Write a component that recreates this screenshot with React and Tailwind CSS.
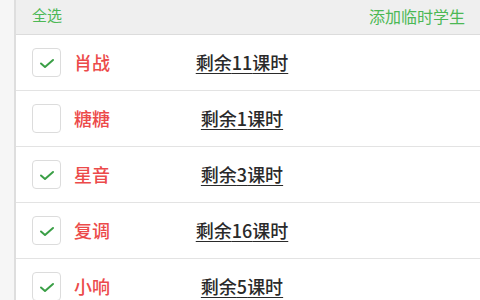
import React from 'react';

const students = [
  { name: '肖战', left: 11, checked: true },
  { name: '糖糖', left: 1, checked: false },
  { name: '星音', left: 3, checked: true },
  { name: '复调', left: 16, checked: true },
  { name: '小响', left: 5, checked: true },
];

const CheckBox = ({ checked }) => (
  <div className="w-[29px] h-[29px] rounded-[4px] border border-[#dcdcdc] bg-white flex items-center justify-center shrink-0">
    {checked && (
      <svg width="16" height="12" viewBox="0 0 16 12" fill="none">
        <path d="M2 6.5 L6 10 L14 3" stroke="#3a9f46" strokeWidth="2" strokeLinecap="round" strokeLinejoin="round" />
      </svg>
    )}
  </div>
);

const App = () => {
  return (
    <div
      className="w-[480px] h-[300px] overflow-hidden flex bg-white"
      style={{ fontFamily: '"Noto Sans CJK SC", "Noto Sans", sans-serif' }}
    >
      <div className="w-[16px] shrink-0 bg-[#f6f6f6] border-r-2 border-[#dedede]" />

      <div className="flex-1 flex flex-col">
        {/* Header */}
        <div className="h-[35px] shrink-0 bg-[#efefef] border-b border-[#dcdcdc] flex items-center justify-between pl-4 pr-[15px] pb-[3px]">
          <span className="text-[15px] text-[#4cb855]">全选</span>
          <span className="text-[16px] text-[#4cb855]">添加临时学生</span>
        </div>

        {/* Rows */}
        {students.map((s) => (
          <div key={s.name} className="h-[56px] shrink-0 border-b border-[#e3e3e3] flex items-center pl-4">
            <CheckBox checked={s.checked} />
            <span className="ml-[13px] w-[80px] text-[18px] font-medium text-[#ec4a4a]">{s.name}</span>
            <span className="w-[176px] text-center text-[18px] font-medium text-[#2a2a2a] underline underline-offset-[3px]">
              剩余{s.left}课时
            </span>
          </div>
        ))}
      </div>
    </div>
  );
};

export default App;
